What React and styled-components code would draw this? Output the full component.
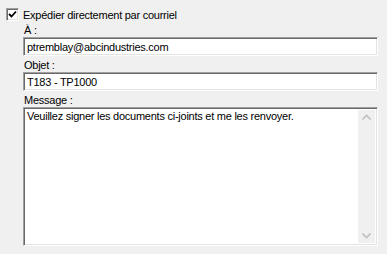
import React from "react";
import styled, { createGlobalStyle } from "styled-components";

const Global = createGlobalStyle`
  html, body {
    margin: 0;
    background: #f0f0f0;
  }
  body {
    font-family: "Liberation Sans", Arial, sans-serif;
    font-size: 11px;
    letter-spacing: -0.25px;
    color: #000;
  }
`;

const Panel = styled.div`
  width: 387px;
  height: 254px;
  box-sizing: border-box;
  padding: 8px 9px 0 6px;
  display: flex;
  flex-direction: column;
`;

const CheckRow = styled.label`
  display: flex;
  align-items: center;
  gap: 4px;
  height: 13px;
`;

const Box = styled.span`
  width: 13px;
  height: 13px;
  box-sizing: border-box;
  background: #fff;
  border-top: 1px solid #a0a0a0;
  border-left: 1px solid #a0a0a0;
  border-right: 1px solid #fff;
  border-bottom: 1px solid #fff;
  box-shadow: inset 1px 1px 0 #696969, inset -1px -1px 0 #e3e3e3;
  display: flex;
  align-items: center;
  justify-content: center;
`;

const Fields = styled.div`
  margin-left: 17px;
  margin-top: 3px;
  display: flex;
  flex-direction: column;
`;

const Caption = styled.div`
  height: 13px;
  line-height: 13px;
  margin-top: ${(p) => p.$top || 0}px;
  padding-left: 1px;
`;

const Sunken = styled.div`
  box-sizing: border-box;
  width: 355px;
  background: #fff;
  border-top: 1px solid #a0a0a0;
  border-left: 1px solid #a0a0a0;
  border-right: 1px solid #fff;
  border-bottom: 1px solid #fff;
  box-shadow: inset 1px 1px 0 #696969, inset -1px -1px 0 #e3e3e3;
`;

const Field = styled(Sunken)`
  height: 19px;
  padding: 3px 3px 0 3px;
  line-height: 13px;
`;

const Area = styled(Sunken)`
  height: 139px;
  display: flex;
  padding: 2px 2px 2px 3px;
`;

const AreaText = styled.div`
  flex: 1;
  line-height: 13px;
`;

const Scroll = styled.div`
  width: 17px;
  background: #f0f0f0;
  display: flex;
  flex-direction: column;
  justify-content: space-between;
  align-items: center;
  padding: 4px 0;
`;

const Chevron = ({ up }) => (
  <svg width="9" height="6" viewBox="0 0 9 6">
    <path
      d={up ? "M0.5 5.5 L4.5 1.5 L8.5 5.5" : "M0.5 0.5 L4.5 4.5 L8.5 0.5"}
      fill="none"
      stroke="#c0c0c0"
      strokeWidth="1.6"
    />
  </svg>
);

export default function App() {
  return (
    <>
      <Global />
      <Panel>
        <CheckRow>
          <Box>
            <svg width="9" height="9" viewBox="0 0 9 9">
              <path d="M1 4 L3.5 6.5 L8 1.5" fill="none" stroke="#000" strokeWidth="1.8" />
            </svg>
          </Box>
          Expédier directement par courriel
        </CheckRow>
        <Fields>
          <Caption>À :</Caption>
          <Field>ptremblay@abcindustries.com</Field>
          <Caption $top={3}>Objet :</Caption>
          <Field>T183 - TP1000</Field>
          <Caption $top={3}>Message :</Caption>
          <Area>
            <AreaText>Veuillez signer les documents ci-joints et me les renvoyer.</AreaText>
            <Scroll>
              <Chevron up />
              <Chevron />
            </Scroll>
          </Area>
        </Fields>
      </Panel>
    </>
  );
}
